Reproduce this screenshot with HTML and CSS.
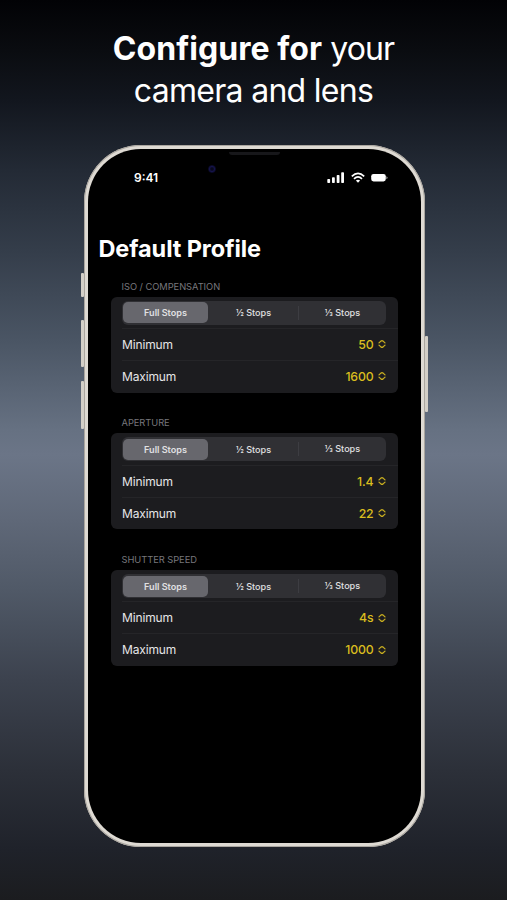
FILE: index.html
```html
<!DOCTYPE html>
<html lang="en">
<head>
<meta charset="utf-8">
<title>Default Profile</title>
<link rel="stylesheet" href="styles.css">
</head>
<body>
<svg class="defs" aria-hidden="true">
  <symbol id="chevrons" viewBox="0 0 8 10"><path d="M1 3.9 2.9 2.1Q4 1.3 5.1 2.1L7 3.9M1 6.1 2.9 7.9Q4 8.7 5.1 7.9L7 6.1"/></symbol>
</svg>
<main class="poster">
  <h1 class="headline"><span class="line first"><strong>Configure for</strong> your</span><span class="line second">camera and lens</span></h1>
  <div class="phone">
    <i class="key mute"></i><i class="key up"></i><i class="key down"></i><i class="key power"></i>
    <i class="speaker"></i><i class="camera"></i>
    <div class="screen">
      <header class="status">
        <time>9:41</time>
        <div class="indicators">
          <svg width="18" height="12" viewBox="0 0 18 12"><g fill="#fff"><rect x="0.3" y="7" width="2.8" height="4" rx=".8"/><rect x="5" y="5.2" width="2.8" height="5.8" rx=".8"/><rect x="9.7" y="3" width="2.8" height="8" rx=".8"/><rect x="14.2" y="0.3" width="2.8" height="10.7" rx=".8"/></g></svg>
          <svg width="14" height="12" viewBox="0 0 14 12"><g fill="none" stroke="#fff" stroke-width="1.7"><path d="M.8 4.3Q7-1.7 13.2 4.3"/><path d="M3 6.8Q7 3 11 6.8"/></g><path d="M4.9 8.6Q7 6.8 9.1 8.6L7 10.8Z" fill="#fff"/></svg>
          <svg width="17" height="12" viewBox="0 0 17 12"><rect x=".2" y="2" width="14.6" height="7.4" rx="2.3" fill="#fff"/><path d="M15.4 4.2Q17.8 5.7 15.4 7.2Z" fill="#aaa"/></svg>
        </div>
      </header>
      <h2 class="title">Default Profile</h2>
      <section class="group">
        <h3>ISO / COMPENSATION</h3>
        <div class="card">
          <div class="segments"><span class="on">Full Stops</span><span>½ Stops</span><span>⅓ Stops</span></div>
          <div class="row"><span>Minimum</span><b>50</b><svg><use href="#chevrons"/></svg></div>
          <div class="row"><span>Maximum</span><b>1600</b><svg><use href="#chevrons"/></svg></div>
        </div>
      </section>
      <section class="group">
        <h3>APERTURE</h3>
        <div class="card">
          <div class="segments"><span class="on">Full Stops</span><span>½ Stops</span><span>⅓ Stops</span></div>
          <div class="row"><span>Minimum</span><b>1.4</b><svg><use href="#chevrons"/></svg></div>
          <div class="row"><span>Maximum</span><b>22</b><svg><use href="#chevrons"/></svg></div>
        </div>
      </section>
      <section class="group">
        <h3>SHUTTER SPEED</h3>
        <div class="card">
          <div class="segments"><span class="on">Full Stops</span><span>½ Stops</span><span>⅓ Stops</span></div>
          <div class="row"><span>Minimum</span><b>4s</b><svg><use href="#chevrons"/></svg></div>
          <div class="row"><span>Maximum</span><b>1000</b><svg><use href="#chevrons"/></svg></div>
        </div>
      </section>
    </div>
  </div>
</main>
</body>
</html>
```

FILE: styles.css
```css
* { box-sizing: border-box; }
body { margin: 0; font-family: Inter, "Liberation Sans", sans-serif; color: #fff; }
.defs { display: none; }
.poster {
  height: 900px;
  overflow: hidden;
  padding-top: 28px;
  background: linear-gradient(#020205 0, #0a0c10 50px, #12161e 100px, #232a35 170px, #343d4a 250px, #4a5564 340px, #667182 430px, #6b7587 455px, #5f6878 520px, #505967 590px, #3c424e 680px, #2c3039 770px, #1f222a 850px, #1b1c1f 900px);
}
.headline { margin: 0; font-size: 32px; line-height: 42px; font-weight: 400; text-align: center; }
.headline strong { font-weight: 700; letter-spacing: 0.05px; }
.line { display: block; white-space: nowrap; }
.first { letter-spacing: -0.9px; }
.second { letter-spacing: -0.7px; }
.phone {
  position: relative;
  width: 341px;
  height: 702px;
  margin: 33px 0 0 84px;
  padding: 4px;
  border-radius: 57px;
  background: #dedad3;
  box-shadow: inset 0 0 0 1px #aaa69f;
}
.screen { height: 100%; border-radius: 53px; background: #000; padding: 20px 23px 0 10px; }
.key { position: absolute; width: 3px; background: #d3cfc7; border-radius: 1px; }
.mute { left: -3px; top: 128px; height: 24px; }
.up { left: -3px; top: 175px; height: 47px; }
.down { left: -3px; top: 236px; height: 48px; }
.power { right: -3px; top: 191px; height: 76px; }
.speaker { position: absolute; left: 145px; top: 7px; width: 51px; height: 3px; border-radius: 0 0 3px 3px; background: #17171a; }
.camera { position: absolute; left: 124px; top: 20px; width: 8px; height: 8px; border-radius: 50%; background: radial-gradient(#08081c 20%, #15134a 45%, #06061a 70%, #000); }
.status { display: flex; justify-content: space-between; align-items: center; height: 17px; padding: 0 1px 0 36px; }
.status time { font-size: 12px; font-weight: 600; }
.indicators { display: flex; gap: 6px; padding-right: 9px; }
.title { margin: 48px 0 -0.4px 0.5px; font-size: 23.5px; line-height: 30px; font-weight: 700; letter-spacing: -0.1px; white-space: nowrap; }
.group { margin-left: 12.5px; height: 136.8px; }
.group h3 { margin: 0; padding: 17px 0 4px 11px; font-size: 9.3px; line-height: 12px; font-weight: 400; letter-spacing: -0.03px; color: #77777c; }
.card { height: 96px; border-radius: 6px; background: #1c1c1f; padding: 4px 0 0 11.5px; }
.segments { display: grid; grid-template-columns: 87px 89px 88px; width: 264px; height: 24px; border-radius: 6px; background: #303034; margin-bottom: 3.2px; align-items: center; text-align: center; font-size: 9.1px; font-weight: 500; line-height: 21px; color: #e0e0e2; }
.segments span:last-child { border-left: 1px solid #3d3d42; line-height: 14px; }
.segments .on { margin: 0 1px; height: 21px; border-radius: 5px; background: #67676d; font-weight: 600; }
.row { display: flex; align-items: center; height: 32px; padding-right: 12px; border-top: 1px solid #252528; font-size: 12px; letter-spacing: -0.15px; color: #e6e6e8; }
.row span { flex: 1; }
.row b { font-weight: 500; font-size: 12.3px; color: #dabd1e; }
.row svg { width: 8px; height: 10px; margin: 0 0.5px 0 4px; fill: none; stroke: #c8ae20; stroke-width: 1.3; stroke-linecap: round; stroke-linejoin: round; }
```
